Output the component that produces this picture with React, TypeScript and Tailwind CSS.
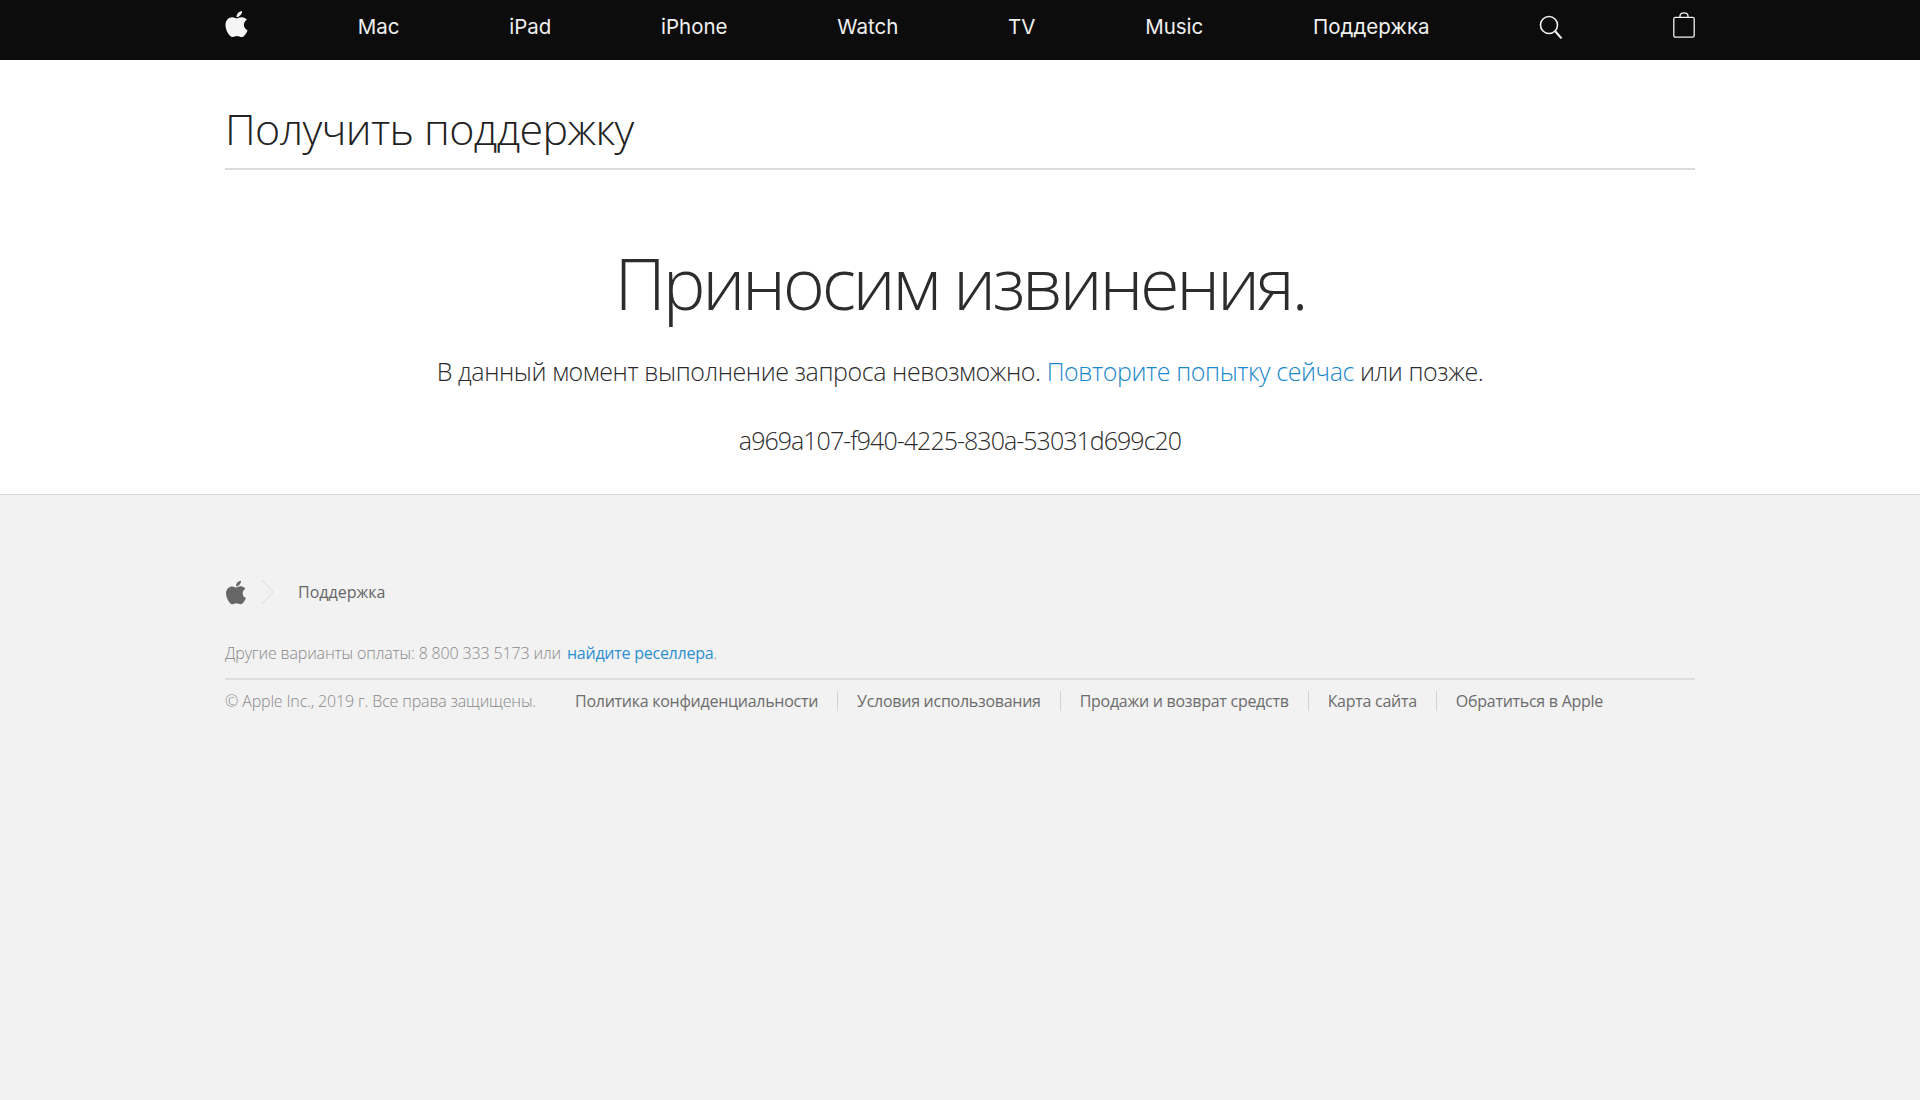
import { FaApple } from "react-icons/fa";

const navItems = ["Mac", "iPad", "iPhone", "Watch", "TV", "Music", "Поддержка"];
const legalLinks = [
  "Политика конфиденциальности",
  "Условия использования",
  "Продажи и возврат средств",
  "Карта сайта",
  "Обратиться в Apple",
];

function SearchIcon() {
  return (
    <svg width="24" height="24" viewBox="0 0 24 24" fill="none" stroke="#f2f2f2" strokeWidth="1.6">
      <circle cx="10" cy="10" r="8.5" />
      <path d="M16 16 L22.5 23.5" strokeWidth="2" />
    </svg>
  );
}

function BagIcon() {
  return (
    <svg width="22" height="26" viewBox="0 0 22 26" fill="none" stroke="#f2f2f2" strokeWidth="1.3" className="-mt-[5px]">
      <rect x="0.8" y="5.4" width="20.4" height="19.8" rx="1.6" />
      <path d="M7 5.4 V4 C7 2 8.6 0.8 11 0.8 C13.4 0.8 15 2 15 4 V5.4" />
    </svg>
  );
}

export default function App() {
  return (
    <div className="min-h-[1100px] flex flex-col bg-[#f2f2f2] font-['Open_Sans',sans-serif]">
      <header className="h-[60px] bg-[#0c0c0c]">
        <nav className="w-[1470px] ml-[225px] h-full flex items-center justify-between pb-[6px] font-['Inter',sans-serif] text-[20.5px] text-[#f0f0f0]">
          <FaApple className="w-[23px] h-[30px] -mt-[6px] text-[#f5f5f5]" />
          {navItems.map((item) => (
            <a key={item} href="#">{item}</a>
          ))}
          <SearchIcon />
          <BagIcon />
        </nav>
      </header>

      <main className="bg-white border-b border-[#d6d6d6] h-[435px]">
        <div className="w-[1470px] ml-[225px] h-[110px] border-b-2 border-[#dcdcdc]">
          <h2 className="pt-[43px] text-[43px] leading-[52px] font-light tracking-[-0.63px] text-[#222]">Получить поддержку</h2>
        </div>
        <div className="text-center text-[#2c2c2c]">
          <h1 className="mt-[72px] text-[72px] leading-[80px] font-light tracking-[-3.33px]">Приносим извинения.</h1>
          <p className="mt-[31px] text-[25px] leading-[36px] font-light tracking-[-0.42px]">
            В данный момент выполнение запроса невозможно.{" "}
            <a href="#" className="text-[#1a88cc]">Повторите попытку сейчас</a> или позже.
          </p>
          <p className="mt-[33px] text-[25px] leading-[36px] font-light tracking-[-0.97px]">a969a107-f940-4225-830a-53031d699c20</p>
        </div>
      </main>

      <footer className="w-[1470px] ml-[225px] pt-[75px] text-[16px] tracking-[-0.15px]">
        <div className="flex items-center h-[44px]">
          <FaApple className="w-[22px] h-[27px] text-[#666]" />
          <svg width="14" height="26" viewBox="0 0 14 26" fill="none" stroke="#dcdcdc" className="ml-[14px]">
            <path d="M1 1 L12 13 L1 25" />
          </svg>
          <span className="ml-[23px] text-[#666] tracking-[0px]">Поддержка</span>
        </div>
        <p className="mt-[27px] leading-[24px] font-light text-[#888]">
          Другие варианты оплаты: 8 800 333 5173 или{" "}
          <a href="#" className="ml-[2px] font-normal tracking-[-0.25px] text-[#2b8fd0]">найдите реселлера</a>.
        </p>
        <div className="mt-[13px] border-t-2 border-[#dedede] pt-[9px] flex items-center">
          <span className="font-light text-[#888] leading-[24px]">© Apple Inc., 2019 г. Все права защищены.</span>
          <div className="ml-[39px] flex items-center text-[#6c6c6c] tracking-[-0.27px]">
            {legalLinks.map((link, i) => (
              <a key={link} href="#" className={i === 0 ? "pr-[19px] leading-[20px]" : "pl-[19px] pr-[19px] leading-[20px] border-l border-[#d2d2d2]"}>{link}</a>
            ))}
          </div>
        </div>
      </footer>
    </div>
  );
}
